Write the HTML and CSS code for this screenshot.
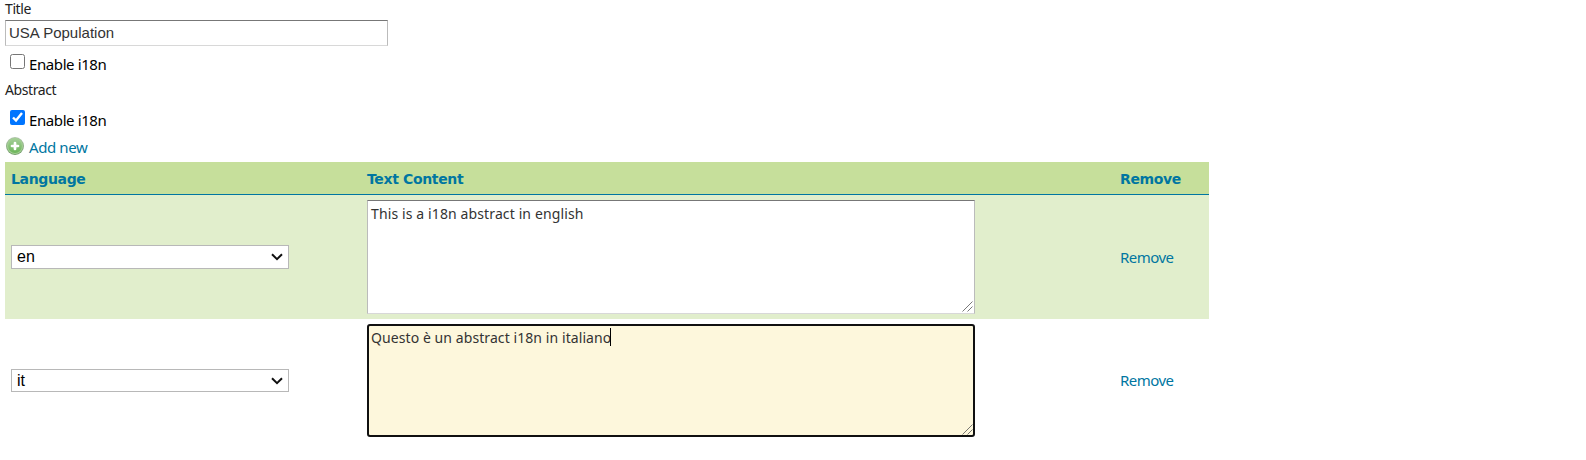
FILE: index.html
```html
<!DOCTYPE html>
<html lang="en">
<head>
<meta charset="utf-8">
<title>Title and abstract</title>
<link rel="stylesheet" href="styles.css">
</head>
<body>
<form class="form">
  <label class="label label-title" for="title"><span>Title</span></label>
  <input class="title-input" id="title" type="text" value="USA Population">
  <label class="check check-title"><input class="box" type="checkbox"><span>Enable i18n</span></label>
  <div class="label label-abstract"><span>Abstract</span></div>
  <label class="check check-abstract"><input class="box" type="checkbox" checked><span>Enable i18n</span></label>
  <a class="add">
    <svg class="add-icon" viewBox="0 0 18 18" width="18" height="18">
      <defs>
        <linearGradient id="disc" x1="0" y1="0" x2="0" y2="1"><stop offset="0" stop-color="#a2cd96"/><stop offset="1" stop-color="#6db65a"/></linearGradient>
        <linearGradient id="rim" x1="0" y1="0" x2="0" y2="1"><stop offset="0" stop-color="#b0c4ac"/><stop offset="1" stop-color="#6f9b66"/></linearGradient>
      </defs>
      <circle cx="9" cy="9" r="9" fill="url(#rim)"/>
      <circle cx="9" cy="9" r="8" fill="#a4d093"/>
      <circle cx="9" cy="9" r="6.9" fill="url(#disc)"/>
      <path d="M9 6v6M6 9h6" stroke="#fff" stroke-width="2.7" stroke-linecap="round"/>
    </svg>
    <span>Add new</span>
  </a>
  <div class="table">
    <div class="row head">
      <span>Language</span><span>Text Content</span><span>Remove</span>
    </div>
    <div class="row even">
      <div class="select"><span>en</span><svg class="chevron" viewBox="0 0 12 8" width="12" height="8"><path d="M1 1.2l5 4.9 5-4.9" fill="none" stroke="#101010" stroke-width="2"/></svg></div>
      <div class="area-wrap"><textarea class="area">This is a i18n abstract in english</textarea><svg class="grip" viewBox="0 0 11 11" width="11" height="11"><path d="M.5 10.5l10-10M5.500 10.500l5-5" stroke="#555" stroke-width=".8" fill="none"/></svg></div>
      <a class="remove">Remove</a>
    </div>
    <div class="row odd">
      <div class="select"><span>it</span><svg class="chevron" viewBox="0 0 12 8" width="12" height="8"><path d="M1 1.2l5 4.9 5-4.9" fill="none" stroke="#101010" stroke-width="2"/></svg></div>
      <div class="area-wrap"><textarea class="area active">Questo è un abstract i18n in italiano</textarea><i class="caret"></i><svg class="grip" viewBox="0 0 11 11" width="11" height="11"><path d="M.5 10.5l10-10M5.500 10.500l5-5" stroke="#555" stroke-width=".8" fill="none"/></svg></div>
      <a class="remove">Remove</a>
    </div>
  </div>
</form>
</body>
</html>
```
FILE: styles.css
```css
* { box-sizing: border-box; }
body { margin: 0; background: #fff; color: #000; font: 15px/18px "Noto Sans", sans-serif; }
.form { display: flex; flex-direction: column; align-items: flex-start; padding-left: 5px; }
.label { display: block; font-size: 14px; letter-spacing: -0.4px; color: #222; white-space: nowrap; }
.label-title { height: 20px; }
.title-input { width: 383px; height: 26px; margin: 0; padding: 0 3px 2px; border: 1px solid; border-color: #777 #bbb #d8d8d8 #bbb; background: #fff; color: #333; font: 15px "Liberation Sans", Arial, sans-serif; }
.check { display: flex; align-items: flex-start; padding-left: 5px; gap: 4px; letter-spacing: -0.4px; white-space: nowrap; }
.box { width: 15px; height: 15px; margin: 0; }
.check span { margin-top: 1px; }
.check-title { height: 27px; margin-top: 8px; }
.label-abstract { height: 29px; }
.check-abstract { height: 27px; }
.add { display: flex; align-items: center; height: 18px; margin: 0 0 7px 1px; gap: 5px; color: #0076a1; letter-spacing: -0.4px; white-space: nowrap; }
.add span { padding-top: 1px; }
.add-icon { display: block; }
.table { width: 1204px; }
.row { display: grid; grid-template-columns: 356px 753px 1fr; align-items: center; padding-left: 6px; }
.head { height: 33px; padding-top: 2px; background: #c6df9b; border-bottom: 1px solid #0076a1; color: #0076a1; font: bold 14px/18px "DejaVu Sans", sans-serif; letter-spacing: -0.35px; }
.even { height: 124px; background: #e1eecc; }
.odd { height: 123px; }
.select { display: flex; align-items: center; justify-content: space-between; width: 278px; height: 24px; padding: 0 5px; border: 1px solid #b8b8b8; background: #fff; font: 16px/18px "Liberation Sans", Arial, sans-serif; }
.area-wrap { position: relative; width: 608px; height: 114px; }
.area { display: block; width: 608px; height: 114px; margin: 0; padding: 4px 3px; border: 1px solid; border-color: #777 #bbb #d8d8d8 #bbb; outline: 0; background: #fff; color: #333; font: 14px/18px "Noto Sans", sans-serif; letter-spacing: 0.12px; resize: none; }
.odd .area-wrap, .active { height: 113px; }
.odd .select { height: 23px; }
.active { border: 2px solid #101010; border-radius: 3px; padding: 3px 2px; background: #fdf7dc; letter-spacing: 0.08px; }
.caret { position: absolute; left: 243px; top: 4px; width: 1px; height: 18px; background: #000; }
.grip { position: absolute; right: 2px; bottom: 2px; }
.remove { color: #0076a1; letter-spacing: -0.55px; padding-bottom: 1px; }
```
